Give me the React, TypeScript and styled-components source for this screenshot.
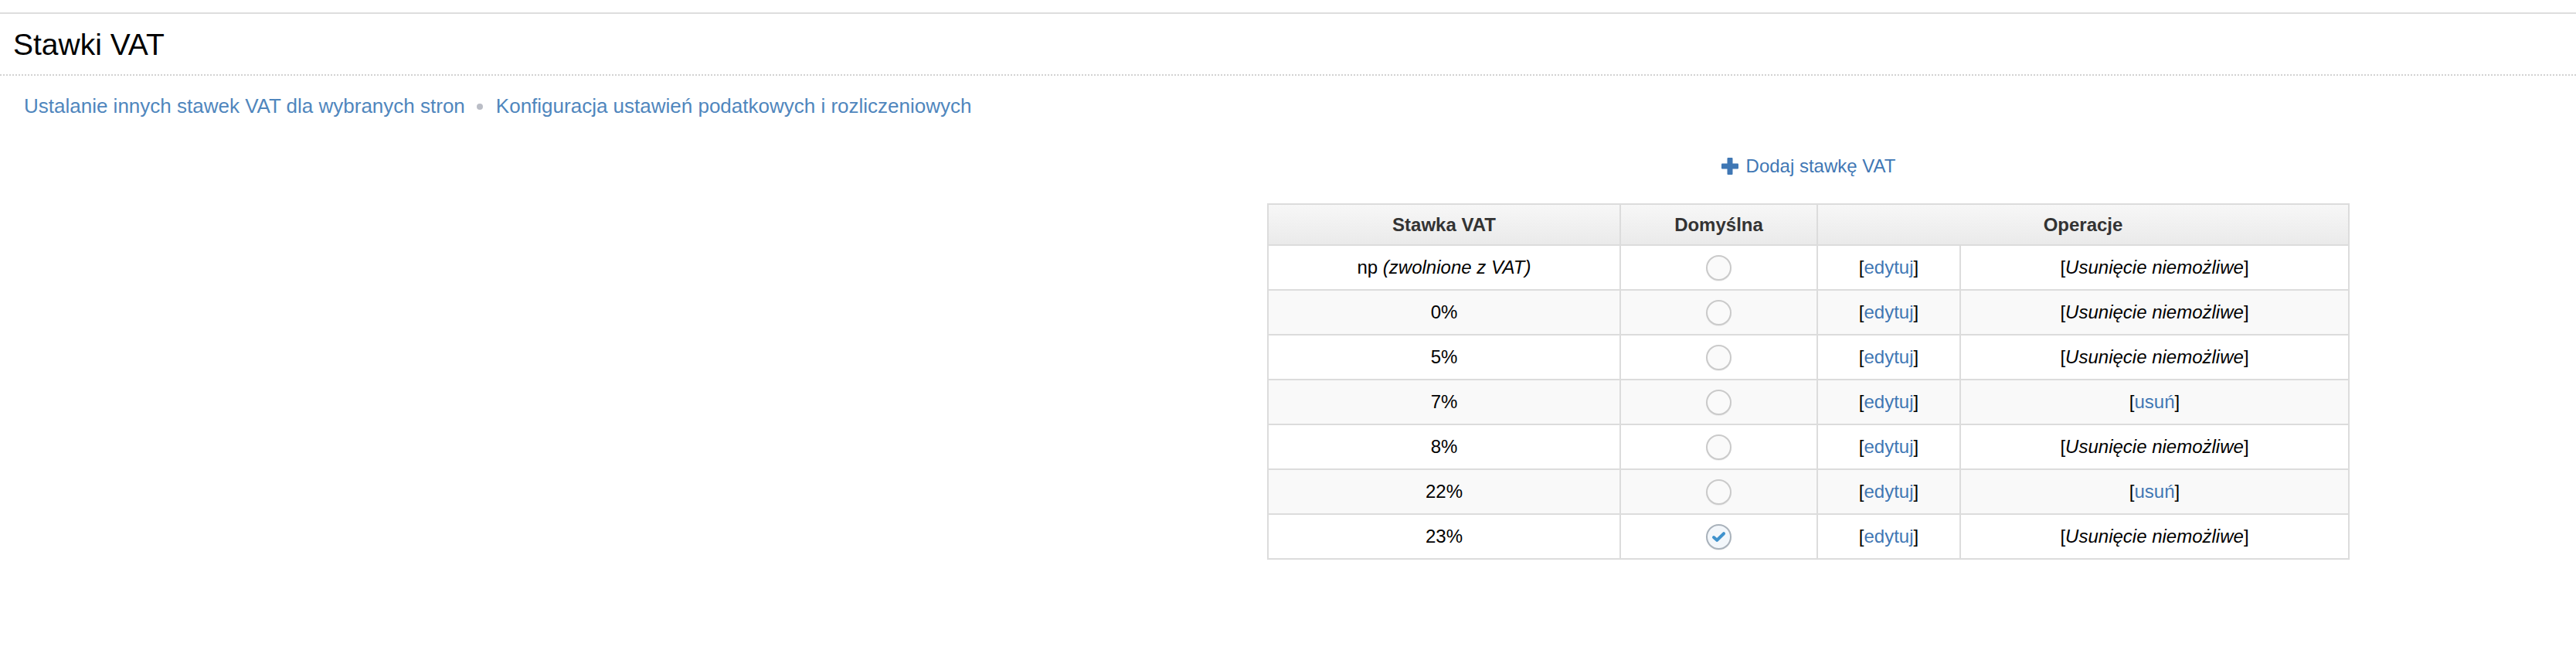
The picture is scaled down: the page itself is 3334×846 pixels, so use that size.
import React from "react";
import styled, { createGlobalStyle } from "styled-components";

const GlobalStyle = createGlobalStyle`
  html, body {
    margin: 0;
    padding: 0;
    background: #ffffff;
    font-family: "Liberation Sans", Arial, Helvetica, sans-serif;
    color: #000;
  }
`;

const Page = styled.div`
  display: flex;
  flex-direction: column;
  min-height: 846px;
`;

const TopBar = styled.div`
  height: 16px;
  border-bottom: 2px solid #dedede;
`;

const TitleBar = styled.header`
  padding: 18px 17px 16px;
  border-bottom: 2px dotted #d2d2d2;
`;

const Title = styled.h1`
  margin: 0;
  font-size: 39px;
  line-height: 44px;
  font-weight: normal;
  color: #000;
`;

const Breadcrumbs = styled.nav`
  display: flex;
  align-items: center;
  margin-top: 24px;
  padding-left: 31px;
  font-size: 26px;
  line-height: 30px;
`;

const CrumbLink = styled.a`
  color: #4f86bd;
  text-decoration: none;
`;

const Bullet = styled.span`
  display: inline-block;
  width: 8px;
  height: 8px;
  border-radius: 50%;
  background: #babdc6;
  margin: 2px 17px 0 15px;
`;

const Content = styled.section`
  display: flex;
  flex-direction: column;
  align-items: center;
  padding-left: 1347px;
`;

const AddLink = styled.a`
  display: flex;
  align-items: center;
  gap: 10px;
  margin-top: 49px;
  font-size: 24px;
  line-height: 28px;
  color: #3f77b4;
  text-decoration: none;
`;

const RatesTable = styled.table`
  margin-top: 34px;
  width: 1399px;
  border-collapse: collapse;
  border: 2px solid #dcdcdc;
  table-layout: fixed;
  font-size: 24px;
`;

const HeadCell = styled.th`
  height: 51px;
  padding: 0;
  border: 2px solid #dcdcdc;
  background: linear-gradient(#f7f7f7, #eaeaea);
  color: #333;
  font-weight: bold;
  text-align: center;
  vertical-align: middle;
`;

const Row = styled.tr<{ $striped: boolean }>`
  background: ${(p) => (p.$striped ? "#f9f9f9" : "#ffffff")};
`;

const Cell = styled.td`
  height: 56px;
  padding: 0;
  border: 2px solid #dcdcdc;
  text-align: center;
  vertical-align: middle;
  color: #000;
`;

const ActionLink = styled.a`
  color: #3f77b4;
  text-decoration: none;
`;

const Radio = styled.span<{ $checked: boolean }>`
  display: inline-flex;
  align-items: center;
  justify-content: center;
  box-sizing: border-box;
  width: 33px;
  height: 33px;
  border-radius: 50%;
  border: 2px solid ${(p) => (p.$checked ? "#a9b2bb" : "#cacaca")};
  background: ${(p) => (p.$checked ? "#f3f7fb" : "#fafafa")};
  box-shadow: 0 1px 1px rgba(0, 0, 0, 0.06);
  vertical-align: middle;
`;

const PlusIcon = () => (
  <svg width="22" height="22" viewBox="0 0 22 22" aria-hidden="true">
    <rect x="7.5" y="0" width="7" height="22" rx="1" fill="#3f77b4" />
    <rect x="0" y="7.5" width="22" height="7" rx="1" fill="#3f77b4" />
  </svg>
);

const CheckIcon = () => (
  <svg width="19" height="15" viewBox="0 0 19 15" aria-hidden="true">
    <path
      d="M3 8 L7.2 11.8 L16 3.2"
      fill="none"
      stroke="#3f92cd"
      strokeWidth="4"
      strokeLinecap="round"
      strokeLinejoin="round"
    />
  </svg>
);

type Rate = {
  label: React.ReactNode;
  isDefault: boolean;
  deletable: boolean;
};

const rates: Rate[] = [
  {
    label: (
      <>
        np <i>(zwolnione z VAT)</i>
      </>
    ),
    isDefault: false,
    deletable: false,
  },
  { label: "0%", isDefault: false, deletable: false },
  { label: "5%", isDefault: false, deletable: false },
  { label: "7%", isDefault: false, deletable: true },
  { label: "8%", isDefault: false, deletable: false },
  { label: "22%", isDefault: false, deletable: true },
  { label: "23%", isDefault: true, deletable: false },
];

export default function App() {
  return (
    <>
      <GlobalStyle />
      <Page>
        <TopBar />
        <TitleBar>
          <Title>Stawki VAT</Title>
        </TitleBar>
        <Breadcrumbs>
          <CrumbLink href="#">Ustalanie innych stawek VAT dla wybranych stron</CrumbLink>
          <Bullet />
          <CrumbLink href="#">Konfiguracja ustawień podatkowych i rozliczeniowych</CrumbLink>
        </Breadcrumbs>
        <Content>
          <AddLink href="#">
            <PlusIcon />
            Dodaj stawkę VAT
          </AddLink>
          <RatesTable>
            <colgroup>
              <col style={{ width: 456 }} />
              <col style={{ width: 255 }} />
              <col style={{ width: 185 }} />
              <col style={{ width: 503 }} />
            </colgroup>
            <thead>
              <tr>
                <HeadCell>Stawka VAT</HeadCell>
                <HeadCell>Domyślna</HeadCell>
                <HeadCell colSpan={2}>Operacje</HeadCell>
              </tr>
            </thead>
            <tbody>
              {rates.map((r, i) => (
                <Row key={i} $striped={i % 2 === 1}>
                  <Cell>{r.label}</Cell>
                  <Cell>
                    <Radio $checked={r.isDefault}>{r.isDefault && <CheckIcon />}</Radio>
                  </Cell>
                  <Cell>
                    [<ActionLink href="#">edytuj</ActionLink>]
                  </Cell>
                  <Cell>
                    {r.deletable ? (
                      <>
                        [<ActionLink href="#">usuń</ActionLink>]
                      </>
                    ) : (
                      <>
                        [<i>Usunięcie niemożliwe</i>]
                      </>
                    )}
                  </Cell>
                </Row>
              ))}
            </tbody>
          </RatesTable>
        </Content>
      </Page>
    </>
  );
}
